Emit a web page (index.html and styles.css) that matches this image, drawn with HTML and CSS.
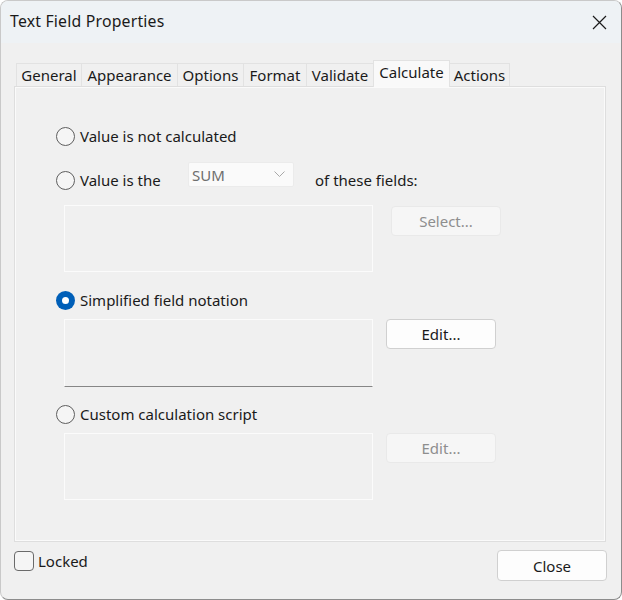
FILE: index.html
```html
<!DOCTYPE html>
<html>
<head>
<meta charset="utf-8">
<link rel="stylesheet" href="styles.css">
</head>
<body>
<div class="window">
  <div class="titlebar">
    <span class="title">Text Field Properties</span>
    <svg class="close-x" width="15" height="15" viewBox="0 0 15 15"><path d="M1 1 L14 14 M14 1 L1 14" stroke="#1b1b1b" stroke-width="1.2" fill="none"/></svg>
  </div>
  <div class="tabs">
    <div class="tab t-general">General</div>
    <div class="tab t-appearance">Appearance</div>
    <div class="tab t-options">Options</div>
    <div class="tab t-format">Format</div>
    <div class="tab t-validate">Validate</div>
    <div class="tab t-calculate active">Calculate</div>
    <div class="tab t-actions">Actions</div>
  </div>
  <div class="panel">
    <div class="row r1">
      <span class="radio"></span><span class="label">Value is not calculated</span>
    </div>
    <div class="row r2">
      <span class="radio"></span><span class="label fixed">Value is the</span>
      <div class="select"><span>SUM</span><svg width="11" height="6" viewBox="0 0 11 6"><path d="M0.5 0.5 L5.5 5.5 L10.5 0.5" stroke="#a8a8a8" stroke-width="1" fill="none"/></svg></div>
      <span class="label of">of these fields:</span>
    </div>
    <div class="boxrow b1">
      <div class="box"></div>
      <div class="btn disabled sel">Select...</div>
    </div>
    <div class="row r3">
      <span class="radio checked"></span><span class="label">Simplified field notation</span>
    </div>
    <div class="boxrow b2">
      <div class="box active"></div>
      <div class="btn">Edit...</div>
    </div>
    <div class="row r4">
      <span class="radio"></span><span class="label">Custom calculation script</span>
    </div>
    <div class="boxrow b3">
      <div class="box"></div>
      <div class="btn disabled">Edit...</div>
    </div>
  </div>
  <div class="footer">
    <div class="check"><span class="checkbox"></span><span class="label">Locked</span></div>
    <div class="btn close">Close</div>
  </div>
</div>
</body>
</html>
```
FILE: styles.css
```css
html, body {
  margin: 0;
  padding: 0;
  background: #ffffff;
}
body {
  font-family: "Noto Sans", "Open Sans", sans-serif;
  font-size: 15px;
  color: #1a1a1a;
}
.window {
  width: 622px;
  height: 600px;
  box-sizing: border-box;
  background: #f0f0f0;
  border: 1px solid #c9c9c9;
  border-right-color: #8c8c8c;
  border-bottom-color: #8c8c8c;
  border-radius: 8px;
  overflow: hidden;
  display: flex;
  flex-direction: column;
}
.titlebar {
  height: 42px;
  flex: none;
  background: #eef2f5;
  display: flex;
  align-items: center;
  justify-content: space-between;
  padding: 0 14px 0 9px;
}
.title {
  font-size: 15.8px;
  letter-spacing: 0.2px;
  color: #1a1a1a;
  margin-top: -2px;
}
.close-x { display: block; }
.tabs {
  display: flex;
  align-items: flex-end;
  margin: 17px 0 0 15px;
  height: 26px;
  position: relative;
  z-index: 1;
}
.tab {
  height: 23px;
  box-sizing: border-box;
  border: 1px solid #e2e2e2;
  border-bottom: none;
  border-right: none;
  padding: 0;
  display: flex;
  align-items: center;
  justify-content: center;
  background: #f0f0f0;
  line-height: 1;
  white-space: nowrap;
  flex: none;
}
.t-general { width: 65px; }
.t-appearance { width: 96px; }
.t-options { width: 66px; }
.t-format { width: 63px; }
.t-validate { width: 67px; }
.t-calculate { width: 77px; }
.t-actions { width: 61px; border-right: 1px solid #e2e2e2; }
.tab.active {
  height: 27px;
  margin-bottom: -1px;
  background: #f9f9f9;
  padding-bottom: 3px;
  border-right: 1px solid #e2e2e2;
}
.tab.active + .tab { border-left: none; width: 60px; }
.panel {
  margin-left: 13px;
  width: 592px;
  height: 456px;
  box-sizing: border-box;
  border: 1px solid #dedede;
  box-shadow: inset 0 0 0 1px #fafafa;
  padding: 39px 0 0 41px;
  flex: none;
}
.row {
  display: flex;
  align-items: center;
}
.r1 { height: 20px; }
.r2 { height: 36px; margin-top: 16px; }
.r3 { height: 20px; margin-top: 18px; }
.r4 { height: 20px; margin-top: 17px; }
.radio {
  width: 19px;
  height: 19px;
  box-sizing: border-box;
  border: 1px solid #5e5e5e;
  border-radius: 50%;
  background: #f5f5f5;
  flex: none;
  display: flex;
  align-items: center;
  justify-content: center;
}
.radio.checked {
  border: none;
  background: #005fb8;
}
.radio.checked::after {
  content: "";
  width: 7px;
  height: 7px;
  border-radius: 50%;
  background: #ffffff;
}
.label {
  margin-left: 5px;
  white-space: nowrap;
}
.label.fixed { width: 108px; flex: none; }
.select {
  align-self: flex-start;
  width: 106px;
  height: 25px;
  box-sizing: border-box;
  background: #fafafa;
  border: 1px solid #ebebeb;
  border-radius: 2px;
  display: flex;
  align-items: center;
  justify-content: space-between;
  padding: 0 8px 0 3px;
  color: #6e6e6e;
}
.select svg { display: block; margin-top: -2px; }
.label.of { margin-left: 21px; }
.boxrow {
  display: flex;
  align-items: flex-start;
  margin-left: 8px;
}
.b1 { margin-top: 7px; }
.b2 { margin-top: 9px; }
.b3 { margin-top: 9px; }
.box {
  width: 309px;
  height: 67px;
  box-sizing: border-box;
  border: 1px solid #fbfbfb;
  background: #f0f0f0;
  flex: none;
}
.box.active {
  height: 68px;
  border-bottom: 1px solid #868686;
}
.btn {
  width: 110px;
  height: 30px;
  box-sizing: border-box;
  border: 1px solid #d0d0d0;
  border-radius: 4px;
  background: #fdfdfd;
  display: flex;
  align-items: center;
  justify-content: center;
  margin-left: 13px;
  flex: none;
}
.btn.disabled {
  background: #f6f6f6;
  border-color: #e9e9e9;
  color: #8e8e8e;
}
.btn.sel {
  margin-left: 18px;
  margin-top: 1px;
}
.footer {
  display: flex;
  align-items: flex-start;
  justify-content: space-between;
  margin: 8px 14px 0 13px;
}
.check {
  display: flex;
  align-items: center;
  margin-top: 1px;
}
.checkbox {
  width: 20px;
  height: 20px;
  box-sizing: border-box;
  border: 1px solid #6a6a6a;
  border-radius: 4px;
  background: #f5f5f5;
  flex: none;
}
.check .label { margin-left: 4px; }
.btn.close {
  width: 110px;
  height: 31px;
  margin-left: 0;
}
```
